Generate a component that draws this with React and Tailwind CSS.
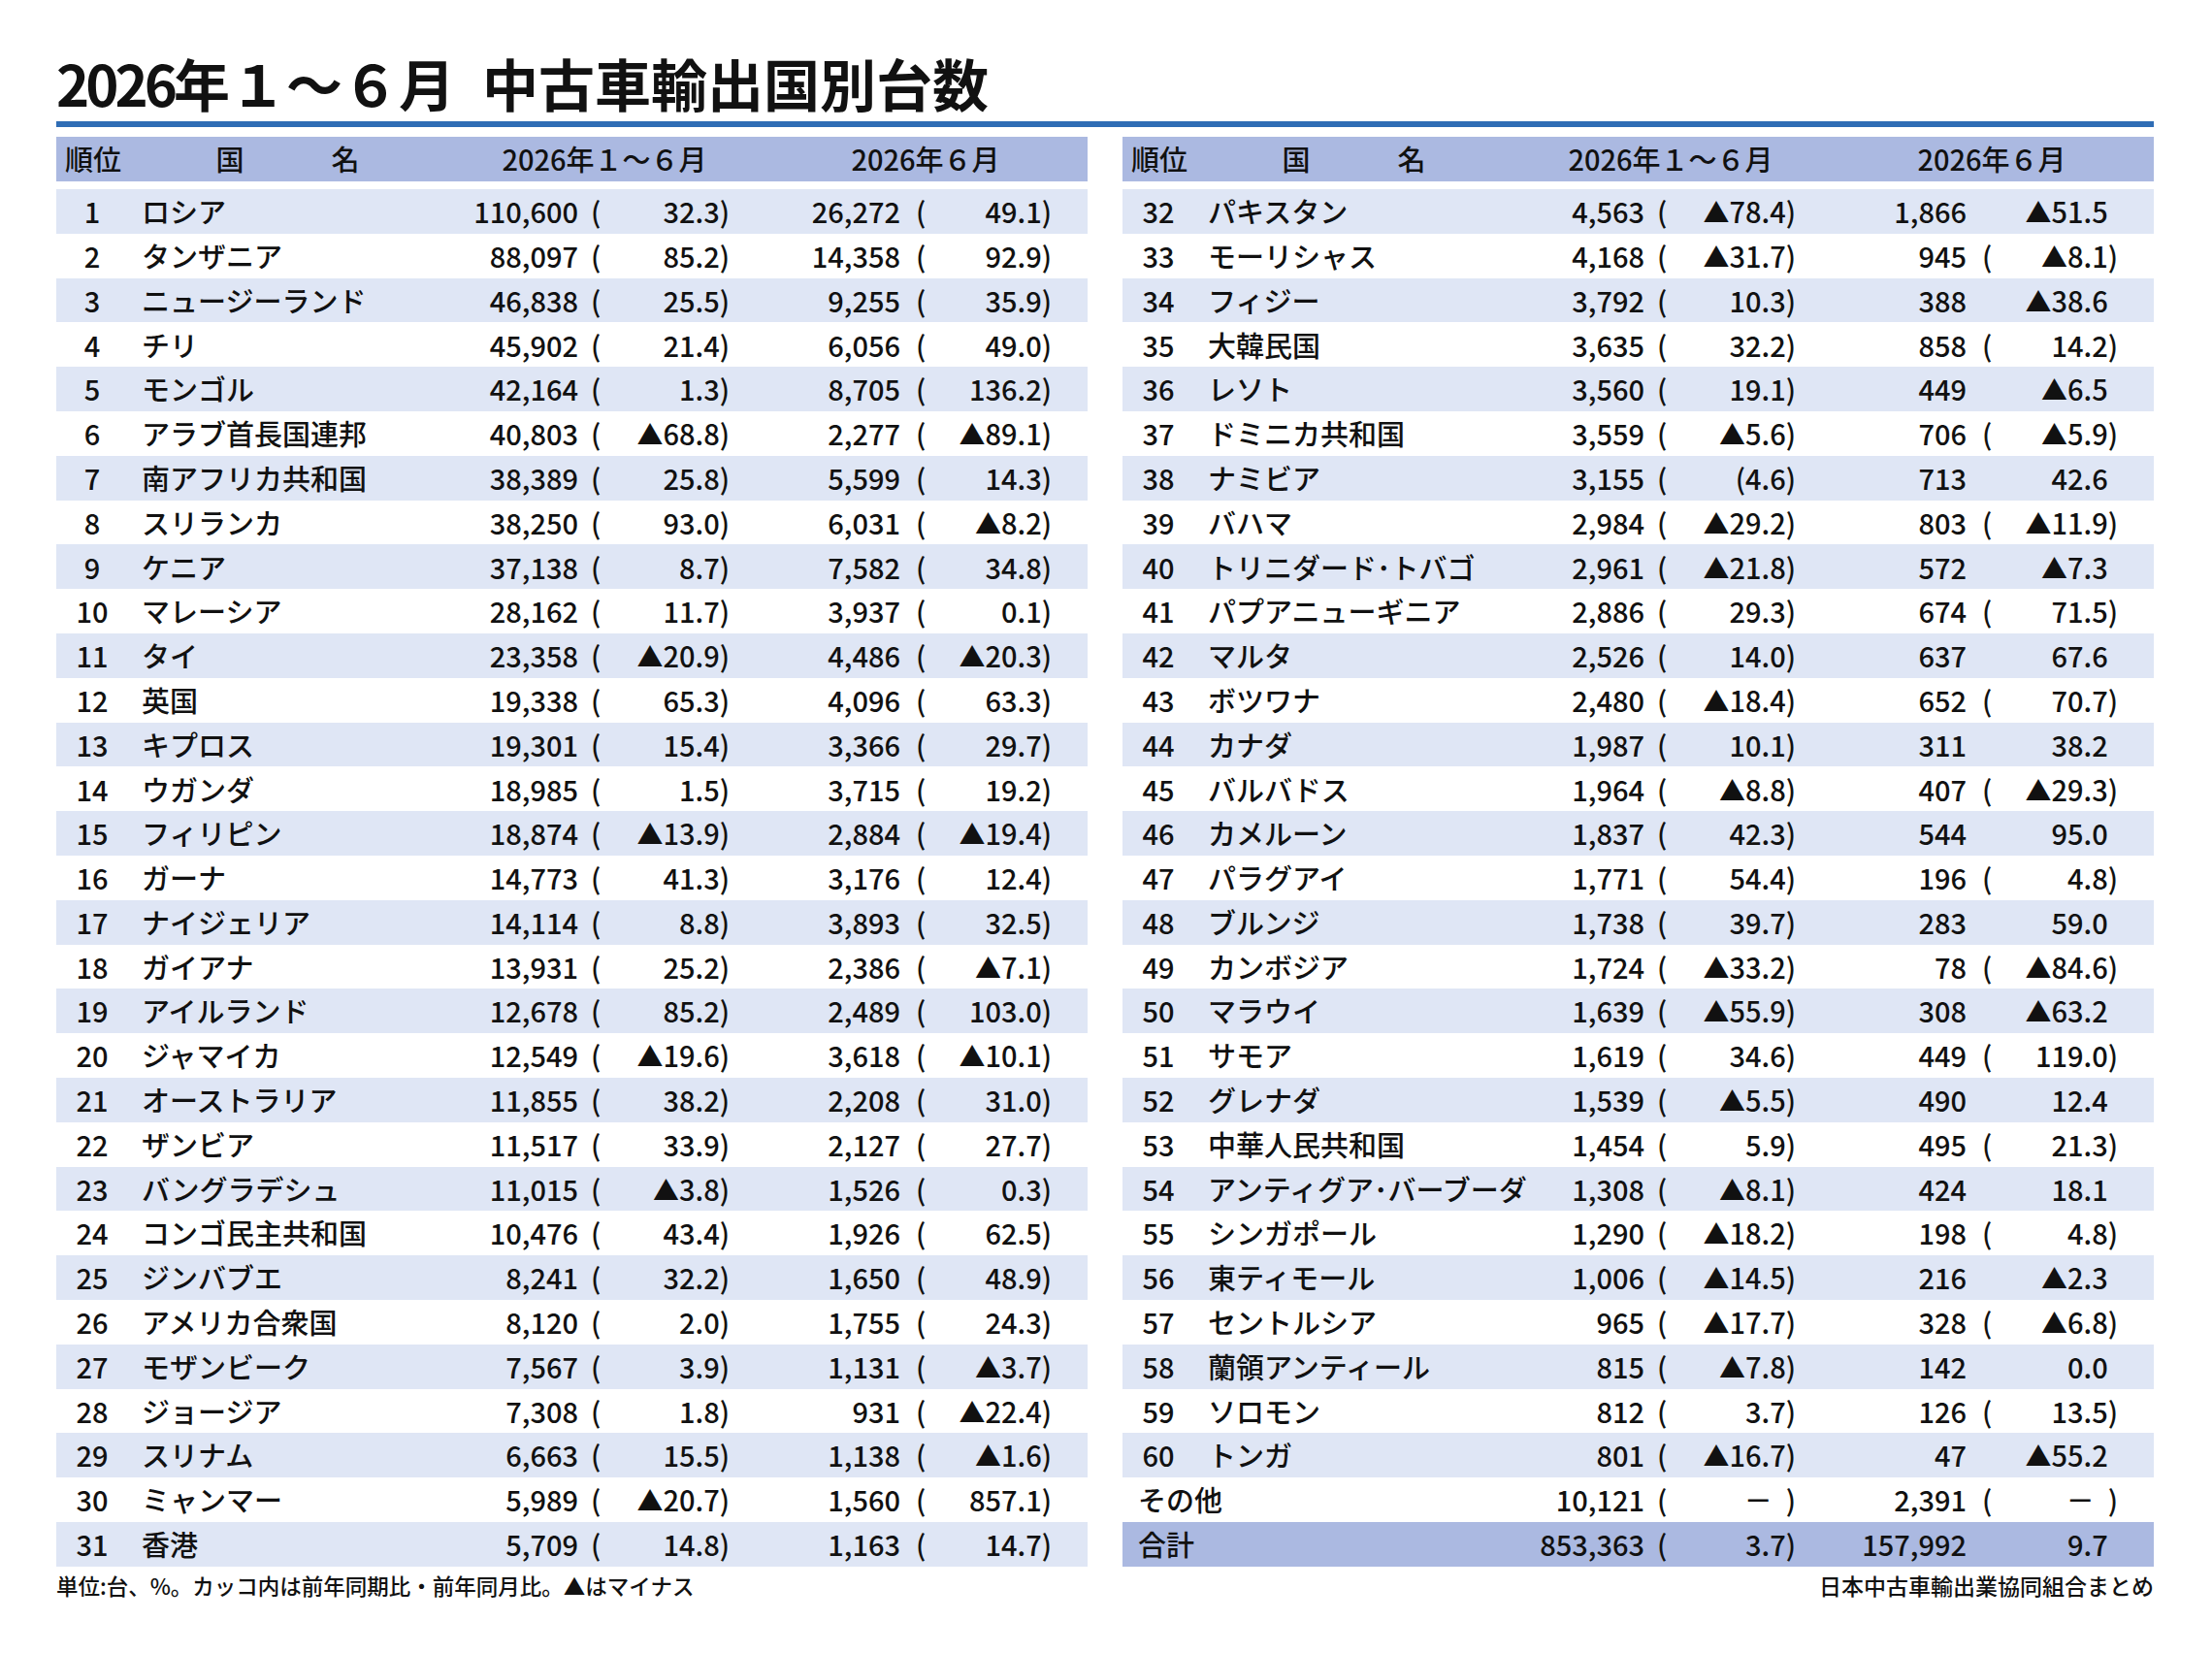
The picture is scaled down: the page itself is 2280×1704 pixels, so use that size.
const left = [
	[1, 'ロシア', '110,600', '32.3', '26,272', '49.1'],
	[2, 'タンザニア', '88,097', '85.2', '14,358', '92.9'],
	[3, 'ニュージーランド', '46,838', '25.5', '9,255', '35.9'],
	[4, 'チリ', '45,902', '21.4', '6,056', '49.0'],
	[5, 'モンゴル', '42,164', '1.3', '8,705', '136.2'],
	[6, 'アラブ首長国連邦', '40,803', '▲68.8', '2,277', '▲89.1'],
	[7, '南アフリカ共和国', '38,389', '25.8', '5,599', '14.3'],
	[8, 'スリランカ', '38,250', '93.0', '6,031', '▲8.2'],
	[9, 'ケニア', '37,138', '8.7', '7,582', '34.8'],
	[10, 'マレーシア', '28,162', '11.7', '3,937', '0.1'],
	[11, 'タイ', '23,358', '▲20.9', '4,486', '▲20.3'],
	[12, '英国', '19,338', '65.3', '4,096', '63.3'],
	[13, 'キプロス', '19,301', '15.4', '3,366', '29.7'],
	[14, 'ウガンダ', '18,985', '1.5', '3,715', '19.2'],
	[15, 'フィリピン', '18,874', '▲13.9', '2,884', '▲19.4'],
	[16, 'ガーナ', '14,773', '41.3', '3,176', '12.4'],
	[17, 'ナイジェリア', '14,114', '8.8', '3,893', '32.5'],
	[18, 'ガイアナ', '13,931', '25.2', '2,386', '▲7.1'],
	[19, 'アイルランド', '12,678', '85.2', '2,489', '103.0'],
	[20, 'ジャマイカ', '12,549', '▲19.6', '3,618', '▲10.1'],
	[21, 'オーストラリア', '11,855', '38.2', '2,208', '31.0'],
	[22, 'ザンビア', '11,517', '33.9', '2,127', '27.7'],
	[23, 'バングラデシュ', '11,015', '▲3.8', '1,526', '0.3'],
	[24, 'コンゴ民主共和国', '10,476', '43.4', '1,926', '62.5'],
	[25, 'ジンバブエ', '8,241', '32.2', '1,650', '48.9'],
	[26, 'アメリカ合衆国', '8,120', '2.0', '1,755', '24.3'],
	[27, 'モザンビーク', '7,567', '3.9', '1,131', '▲3.7'],
	[28, 'ジョージア', '7,308', '1.8', '931', '▲22.4'],
	[29, 'スリナム', '6,663', '15.5', '1,138', '▲1.6'],
	[30, 'ミャンマー', '5,989', '▲20.7', '1,560', '857.1'],
	[31, '香港', '5,709', '14.8', '1,163', '14.7'],
];

// right side: shaded rows have no parens in the 6月 column
const right = [
	[32, 'パキスタン', '4,563', '▲78.4', '1,866', '▲51.5'],
	[33, 'モーリシャス', '4,168', '▲31.7', '945', '▲8.1'],
	[34, 'フィジー', '3,792', '10.3', '388', '▲38.6'],
	[35, '大韓民国', '3,635', '32.2', '858', '14.2'],
	[36, 'レソト', '3,560', '19.1', '449', '▲6.5'],
	[37, 'ドミニカ共和国', '3,559', '▲5.6', '706', '▲5.9'],
	[38, 'ナミビア', '3,155', '(4.6', '713', '42.6'],
	[39, 'バハマ', '2,984', '▲29.2', '803', '▲11.9'],
	[40, 'トリニダード･トバゴ', '2,961', '▲21.8', '572', '▲7.3'],
	[41, 'パプアニューギニア', '2,886', '29.3', '674', '71.5'],
	[42, 'マルタ', '2,526', '14.0', '637', '67.6'],
	[43, 'ボツワナ', '2,480', '▲18.4', '652', '70.7'],
	[44, 'カナダ', '1,987', '10.1', '311', '38.2'],
	[45, 'バルバドス', '1,964', '▲8.8', '407', '▲29.3'],
	[46, 'カメルーン', '1,837', '42.3', '544', '95.0'],
	[47, 'パラグアイ', '1,771', '54.4', '196', '4.8'],
	[48, 'ブルンジ', '1,738', '39.7', '283', '59.0'],
	[49, 'カンボジア', '1,724', '▲33.2', '78', '▲84.6'],
	[50, 'マラウイ', '1,639', '▲55.9', '308', '▲63.2'],
	[51, 'サモア', '1,619', '34.6', '449', '119.0'],
	[52, 'グレナダ', '1,539', '▲5.5', '490', '12.4'],
	[53, '中華人民共和国', '1,454', '5.9', '495', '21.3'],
	[54, 'アンティグア･バーブーダ', '1,308', '▲8.1', '424', '18.1'],
	[55, 'シンガポール', '1,290', '▲18.2', '198', '4.8'],
	[56, '東ティモール', '1,006', '▲14.5', '216', '▲2.3'],
	[57, 'セントルシア', '965', '▲17.7', '328', '▲6.8'],
	[58, '蘭領アンティール', '815', '▲7.8', '142', '0.0'],
	[59, 'ソロモン', '812', '3.7', '126', '13.5'],
	[60, 'トンガ', '801', '▲16.7', '47', '▲55.2'],
];

const cols =
	'grid grid-cols-[74px_346px_118px_32px_124px_176px_32px_124px_1fr] items-center h-[45.8px] whitespace-nowrap';

function Pct({ v }) {
	if (v === '－') return <span className="pr-[14px]">－</span>;
	if (v.startsWith('▲')) {
		return (
			<>
				<span className="text-[27px]">▲</span>
				{v.slice(1)}
			</>
		);
	}
	return v;
}

function Cells({ v1, p1, v2, p2, noParen }) {
	return (
		<>
			<div className="text-right">{v1}</div>
			<div className="pl-[13px]">(</div>
			<div className="text-right">
				<Pct v={p1} />)
			</div>
			<div className="text-right">{v2}</div>
			<div className={`pl-[16px] ${noParen ? 'invisible' : ''}`}>(</div>
			<div className="text-right">
				<Pct v={p2} />
				<span className={noParen ? 'invisible' : ''}>)</span>
			</div>
			<div />
		</>
	);
}

function CountryRow({ i, r, noParen }) {
	const [rank, name, v1, p1, v2, p2] = r;
	return (
		<div className={`${cols} ${i % 2 === 0 ? 'bg-[#dfe6f5]' : 'bg-white'}`}>
			<div className="text-center">{rank}</div>
			<div className="pl-[14px]">{name}</div>
			<Cells v1={v1} p1={p1} v2={v2} p2={p2} noParen={noParen} />
		</div>
	);
}

function SumRow({ bg, label, v1, p1, v2, p2, noParen }) {
	return (
		<div className={`${cols} ${bg}`}>
			<div className="col-span-2 pl-[16px]">{label}</div>
			<Cells v1={v1} p1={p1} v2={v2} p2={p2} noParen={noParen} />
		</div>
	);
}

function Header() {
	return (
		<div className="flex items-center h-[46px] bg-[#abb9e1] whitespace-nowrap">
			<div className="w-[120px] pl-[9px]">順位</div>
			<div className="w-[118px] text-center">国</div>
			<div className="w-[120px] text-center">名</div>
			<div className="w-[414px] text-center">2026年１～６月</div>
			<div className="w-[248px] text-center">2026年６月</div>
		</div>
	);
}

export default function App() {
	return (
		<div className="w-[2280px] h-[1704px] bg-white pl-[58px] pr-[60px] pt-[56px] text-[#111] font-['Noto_Sans_CJK_JP','Noto_Sans_CJK_SC',sans-serif]">
			<h1 className="flex items-center h-[58px] text-[58px] leading-none font-bold whitespace-nowrap">
				<span>
					<span className="tracking-[-4px]">2026</span>年１～６月
				</span>
				<span className="ml-[28px]">中古車輸出国別台数</span>
			</h1>
			<div className="mt-[11px] h-[6px] bg-[#2f6db5]" />

			<div className="flex gap-[36px] mt-[10px] text-[29px] font-medium">
				{/* left table */}
				<div className="w-[1063px]">
					<Header />
					<div className="mt-[8px]">
						{left.map((r, i) => (
							<CountryRow key={r[0]} i={i} r={r} />
						))}
					</div>
					<div className="mt-[6px] text-[22.5px] leading-[26px]">
						単位:台、%。カッコ内は前年同期比・前年同月比。▲はマイナス
					</div>
				</div>

				{/* right table */}
				<div className="w-[1063px]">
					<Header />
					<div className="mt-[8px]">
						{right.map((r, i) => (
							<CountryRow key={r[0]} i={i} r={r} noParen={i % 2 === 0} />
						))}
						<SumRow
							bg="bg-white"
							label="その他"
							v1="10,121"
							p1="－"
							v2="2,391"
							p2="－"
						/>
						<SumRow
							bg="bg-[#abb9e1]"
							label="合計"
							v1="853,363"
							p1="3.7"
							v2="157,992"
							p2="9.7"
							noParen
						/>
					</div>
					<div className="mt-[6px] text-[23px] leading-[26px] text-right">
						日本中古車輸出業協同組合まとめ
					</div>
				</div>
			</div>
		</div>
	);
}
